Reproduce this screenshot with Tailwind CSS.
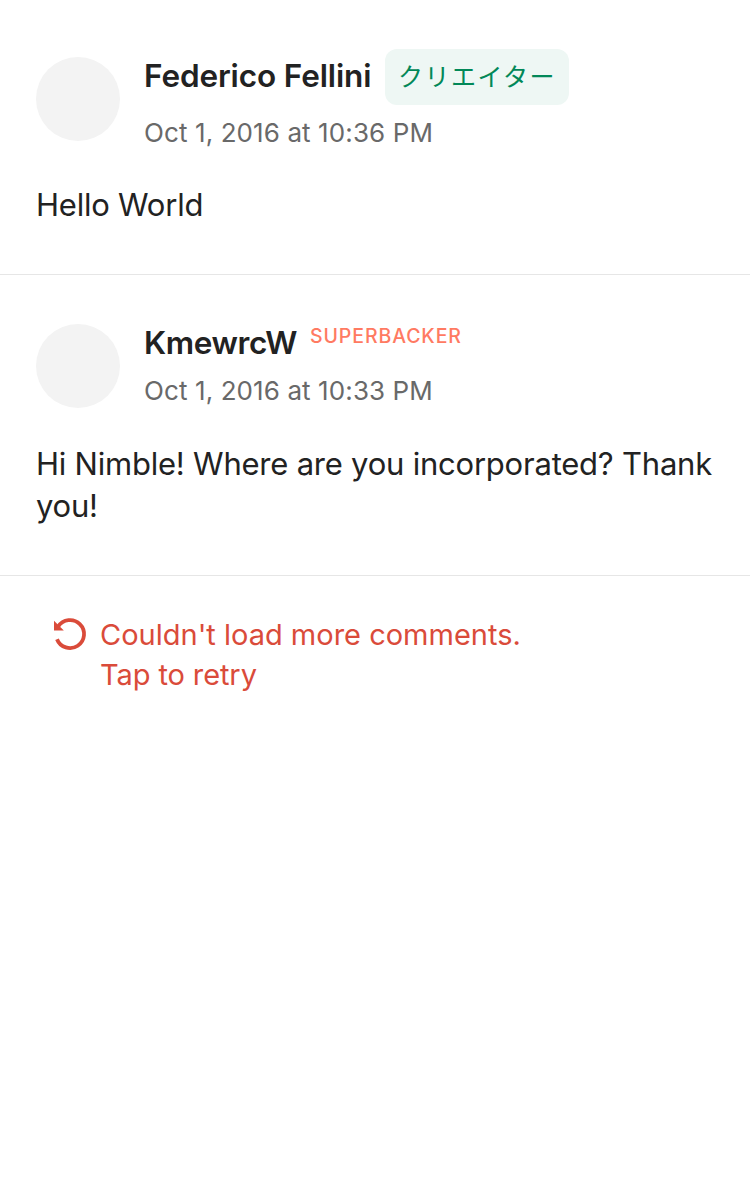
<!DOCTYPE html>
<html lang="en">
<head>
<meta charset="utf-8">
<title>Comments</title>
<script src="https://cdn.jsdelivr.net/npm/@tailwindcss/browser@4"></script>
</head>
<body class="bg-white text-[#222222] font-['Inter','Noto_Sans_CJK_JP',sans-serif]">
<main class="w-[750px] h-[1200px] overflow-hidden bg-white">
  <article class="h-[275px] border-b border-[#e6e6e6] px-9 pt-[49px]">
    <header class="flex gap-6">
      <div class="mt-2 size-[84px] rounded-full bg-[#f3f3f3] shrink-0"></div>
      <div>
        <div class="flex gap-[13px] h-14 items-center">
          <h2 class="w-[228px] pb-0.5 whitespace-nowrap text-[31.5px] leading-[38px] font-semibold tracking-[-0.12px]">Federico Fellini</h2>
          <span class="flex h-14 w-[184px] items-center justify-center rounded-xl bg-[#eef7f4] pt-px text-[25px] tracking-[1.5px] text-[#028858] whitespace-nowrap">クリエイター</span>
        </div>
        <p class="mt-3 text-[26px] leading-8 tracking-[0.1px] text-[#696969] whitespace-nowrap">Oct 1, 2016 at 10:36 PM</p>
      </div>
    </header>
    <p class="mt-[35px] text-[31px] leading-[42px] tracking-[-0.22px]">Hello World</p>
  </article>
  <article class="h-[301px] border-b border-[#e6e6e6] px-9 pt-[49px]">
    <header class="flex gap-6">
      <div class="size-[84px] rounded-full bg-[#f3f3f3] shrink-0"></div>
      <div>
        <div class="flex gap-[13px] h-[38px]">
          <h2 class="w-[153px] whitespace-nowrap text-[31.5px] leading-[38px] font-semibold tracking-[-0.4px]">KmewrcW</h2>
          <span class="text-[19.5px] leading-6 font-medium tracking-[0.9px] text-[#ff7a62] whitespace-nowrap">SUPERBACKER</span>
        </div>
        <p class="mt-[13px] text-[26px] leading-8 tracking-[0.1px] text-[#696969] whitespace-nowrap">Oct 1, 2016 at 10:33 PM</p>
      </div>
    </header>
    <p class="mt-[35px] text-[31px] leading-[42px] tracking-[-0.22px] whitespace-nowrap">Hi Nimble! Where are you incorporated? Thank<br>you!</p>
  </article>
  <div class="flex gap-[11px] pl-[53px] pt-[39px] text-[#da4b3a]">
    <svg class="mt-0.5 size-9 shrink-0" viewBox="0 0 36 36" fill="none"><path d="M5.2 9.6A14 14 0 1 1 4 22.2" stroke="currentColor" stroke-width="3.8"/><path d="M1 3.8v9.8h9.8z" fill="currentColor"/></svg>
    <p class="text-[29px] leading-10 whitespace-nowrap">Couldn't load more comments.<br><span class="tracking-[-0.1px]">Tap to retry</span></p>
  </div>
</main>
</body>
</html>
